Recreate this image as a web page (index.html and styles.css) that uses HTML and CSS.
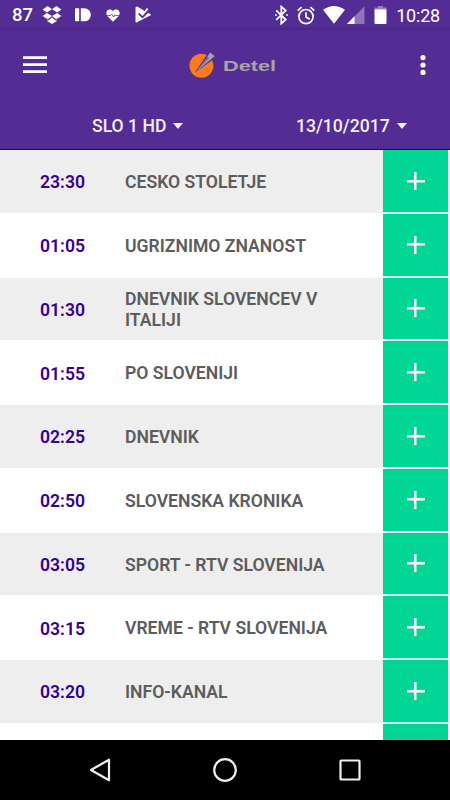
FILE: index.html
```
<!DOCTYPE html>
<html lang="sl">
  <head>
    <meta charset="UTF-8" />
    <meta name="viewport" content="width=device-width, initial-scale=1" />
    <title>Detel - spored</title>
    <link rel="stylesheet" href="styles.css">
  </head>
  <body>
    <div class="screen">
      <div class="statusbar">
        <div class="status-left">
          <span class="status-text">87</span>
          <svg class="dropbox" width="20" height="20" viewBox="0 0 20 20" fill="#fff">
            <path d="M5.7 1L10 4.3 4.8 7.5 .6 4.4zM14.3 1L10 4.3l5.2 3.2 4.2-3.1zM4.8 7.9L.6 11l5.1 3.2L10 11zM15.2 7.9l4.2 3.1-5.1 3.2L10 11zM5.4 15.1l.8.4L10 12.4l3.8 3.1.8-.4v1.2L10 19l-4.6-2.7z" />
          </svg>
          <svg class="push" width="16" height="14" viewBox="0 0 16 14" fill="#fff">
            <rect x="0" y=".3" width="4.2" height="13" rx=".8" />
            <path d="M5.8.3H9.5a6.4 6.5 0 0 1 0 13H5.8z" />
          </svg>
          <svg class="heart" width="14" height="13" viewBox="0 0 14 13">
            <path d="M7 12.8L1.4 7.2C-1 4 .8.4 3.7.4 5.3.4 6.4 1.1 7 2c.6-.9 1.7-1.6 3.3-1.6 2.9 0 4.7 3.6 2.3 6.8z" fill="#fff" />
            <path d="M1 6.6h3.6l1.1-1.2 1.9 2.6 1.3-2.2.8.8H13" fill="none" stroke="#532c94" stroke-width=".8" />
          </svg>
          <svg class="play" width="17" height="18" viewBox="0 0 17 18">
            <path d="M1 1.2v15L15.6 8.8 13 7.2 7.6 12.4 3.6 8.4l2-2 2 2 2.4-2.6L2.6 1.2z" fill="#fff" stroke="#fff" stroke-width="1" stroke-linejoin="round" />
            <path d="M4 7.4l3.5 3.5 6.6-7" fill="none" stroke="#532c94" stroke-width="2.4" />
            <path d="M5 6.2l2.5 2.5 5.2-6" fill="none" stroke="#fff" stroke-width="1.8" />
          </svg>
        </div>
        <div class="status-right">
          <svg class="bluetooth" width="13" height="20" viewBox="0 0 13 20" fill="none" stroke="#fff" stroke-width="1.8">
            <path d="M1.2 5.4l9.5 9.2-4.4 4V1.7l4.4 3.9-9.5 9.3" />
            <path d="M.9 9.3v1.5M12 9.3v1.5" />
          </svg>
          <svg class="alarm" width="18" height="19" viewBox="0 0 18 19" fill="none" stroke="#fff" stroke-width="1.7">
            <circle cx="9" cy="10.6" r="7.1" />
            <path d="M.7 4.6L4.6 1.2M17.3 4.6l-3.9-3.4M9 6.2v4.8l3.7 2.3" />
          </svg>
          <svg class="wifi" width="22" height="18" viewBox="0 0 22 18" fill="#fff">
            <path d="M0 3.8Q11-3.8 22 3.8L11 17.8z" />
          </svg>
          <svg class="signal" width="18" height="18" viewBox="0 0 18 18" fill="#fff">
            <path d="M17.5.3V18H0z" opacity=".35" />
            <path d="M7.5 10.3V18H0z" />
          </svg>
          <svg class="battery" width="13" height="18" viewBox="0 0 13 18" fill="#fff">
            <path d="M4 0h5v1.5h3.5V3.3H.5V1.5H4z" opacity=".4" />
            <path d="M.5 3.3h12V17q0 1-1 1h-10q-1 0-1-1z" />
          </svg>
          <span class="status-text clock">10:28</span>
        </div>
      </div>

      <div class="toolbar">
        <svg width="24" height="18" viewBox="0 0 24 18" fill="#fff">
          <path d="M0 .3h24v2.6H0zM0 7.3h24v2.6H0zM0 14.3h24v2.6H0z" />
        </svg>
        <svg class="logo" width="90" height="28" viewBox="0 0 90 28">
          <circle cx="12.4" cy="14.8" r="12" fill="#f97a1f" />
          <path d="M6 21.4L18.4 3l6.4 5z" fill="#532c94" />
          <path d="M7.4 20.2L21.2 1.6l4.4 3.6z" fill="#a9a5a4" />
          <path d="M6.4 20.8L18 5.2l2.2 1.8z" fill="#532c94" opacity=".55" />
          <text class="logo-text" x="34" y="20.2" textLength="53" lengthAdjust="spacingAndGlyphs">Detel</text>
        </svg>
        <svg width="6" height="22" viewBox="0 0 6 22" fill="#fff">
          <circle cx="3" cy="3.6" r="2.6" />
          <circle cx="3" cy="11" r="2.6" />
          <circle cx="3" cy="18.4" r="2.6" />
        </svg>
      </div>

      <div class="filters">
        <div class="select channel">SLO 1 HD <span class="caret"></span></div>
        <div class="select date">13/10/2017 <span class="caret"></span></div>
      </div>

      <ul class="programme">
        <li class="row">
          <span class="time">23:30</span>
          <span class="title">CESKO STOLETJE</span>
          <button class="add" aria-label="+"></button>
        </li>
        <li class="row">
          <span class="time">01:05</span>
          <span class="title">UGRIZNIMO ZNANOST</span>
          <button class="add" aria-label="+"></button>
        </li>
        <li class="row">
          <span class="time">01:30</span>
          <span class="title">DNEVNIK SLOVENCEV V ITALIJI</span>
          <button class="add" aria-label="+"></button>
        </li>
        <li class="row">
          <span class="time">01:55</span>
          <span class="title">PO SLOVENIJI</span>
          <button class="add" aria-label="+"></button>
        </li>
        <li class="row">
          <span class="time">02:25</span>
          <span class="title">DNEVNIK</span>
          <button class="add" aria-label="+"></button>
        </li>
        <li class="row">
          <span class="time">02:50</span>
          <span class="title">SLOVENSKA KRONIKA</span>
          <button class="add" aria-label="+"></button>
        </li>
        <li class="row">
          <span class="time">03:05</span>
          <span class="title">SPORT - RTV SLOVENIJA</span>
          <button class="add" aria-label="+"></button>
        </li>
        <li class="row">
          <span class="time">03:15</span>
          <span class="title">VREME - RTV SLOVENIJA</span>
          <button class="add" aria-label="+"></button>
        </li>
        <li class="row">
          <span class="time">03:20</span>
          <span class="title">INFO-KANAL</span>
          <button class="add" aria-label="+"></button>
        </li>
        <li class="row">
          <span class="time"></span>
          <span class="title"></span>
          <button class="add" aria-label="+"></button>
        </li>
      </ul>

      <div class="navbar">
        <svg width="26" height="26" viewBox="0 0 26 26">
          <path d="M4 13L22 2.7v20.6z" />
        </svg>
        <svg width="26" height="26" viewBox="0 0 26 26">
          <circle cx="13" cy="13" r="10.8" />
        </svg>
        <svg width="26" height="26" viewBox="0 0 26 26">
          <rect x="3.5" y="3.5" width="19" height="19" rx=".8" />
        </svg>
      </div>
    </div>
  </body>
</html>
```
FILE: styles.css
```
* {
  box-sizing: border-box;
}
body {
  font-family: Roboto, "Noto Sans", sans-serif;
  margin: 0;
  padding: 0;
  background-color: #fff;
}
svg {
  display: block;
  flex: none;
}
.screen {
  display: flex;
  flex-direction: column;
  width: 450px;
  height: 800px;
  overflow: hidden;
}

/* status bar */
.statusbar {
  display: flex;
  justify-content: space-between;
  flex: none;
  height: 30px;
  padding: 0 10px 0 12px;
  background: linear-gradient(#532c94 27px, #482582 30px);
  color: #fff;
}
.status-left,
.status-right {
  display: flex;
  align-items: center;
}
.status-text {
  font-size: 18.5px;
  font-weight: 500;
  line-height: 30px;
}
.dropbox {
  margin-left: 9px;
}
.push {
  margin-left: 13px;
}
.heart {
  margin-left: 15px;
}
.play {
  margin-left: 15px;
}
.alarm {
  margin-left: 9px;
}
.wifi {
  margin-left: 8px;
}
.signal {
  margin-left: 2px;
}
.battery {
  margin-left: 9px;
}
.clock {
  padding-top: 1px;
  margin-left: 9px;
  font-size: 18px;
  font-weight: 450;
  letter-spacing: -0.2px;
}

/* header */
.toolbar {
  display: flex;
  justify-content: space-between;
  align-items: center;
  flex: none;
  height: 70px;
  padding: 0 24.5px 0 23px;
  background-color: #532c94;
}
.logo {
  margin-left: 2px;
}
.logo-text {
  font-family: "Liberation Sans", Arial, sans-serif;
  font-size: 14.5px;
  font-weight: bold;
  fill: #a9a5a4;
}
.filters {
  display: flex;
  flex: none;
  height: 50px;
  border-bottom: 1px solid #220080;
  background-color: #532c94;
}
.select {
  display: flex;
  align-items: center;
  width: 50%;
  padding-top: 2px;
  color: #f3eef8;
  font-size: 17.6px;
  font-weight: 500;
}
.channel {
  padding-left: 92px;
}
.date {
  padding-left: 71px;
}
.caret {
  margin-left: 7px;
  border-left: 5.5px solid transparent;
  border-right: 5.5px solid transparent;
  border-top: 6px solid #f3eef8;
}

/* programme list */
.programme {
  flex: 1;
  min-height: 0;
  margin: 0;
  padding: 0;
  overflow: hidden;
  list-style: none;
}
.row {
  display: flex;
  align-items: center;
  height: 63.75px;
  padding: 0 2px 0 40px;
  border-bottom: 1.25px solid #fff;
}
.row:nth-child(odd) {
  background-color: #eee;
}
.time {
  width: 85px;
  padding-top: 2px;
  color: #38008f;
  font-size: 17.6px;
  font-weight: 600;
}
.title {
  flex: 1;
  padding-top: 2px;
  padding-right: 50px;
  color: #5c5c5c;
  font-size: 17.6px;
  font-weight: 600;
  line-height: 20.5px;
}
.add {
  display: flex;
  align-items: center;
  justify-content: center;
  align-self: stretch;
  width: 65px;
  padding: 0;
  border: none;
  border-bottom: 0.5px solid #c9f3e5;
  background-color: #02d695;
}
.add::before {
  content: "";
  width: 18px;
  height: 18px;
  background: linear-gradient(#fff, #fff) center / 18px 2.5px no-repeat,
    linear-gradient(#fff, #fff) center / 2.5px 18px no-repeat;
}

/* android navigation */
.navbar {
  display: flex;
  justify-content: center;
  align-items: center;
  gap: 99px;
  flex: none;
  height: 60px;
  background-color: #000;
}
.navbar svg {
  fill: none;
  stroke: #eee;
  stroke-width: 2.2;
  stroke-linejoin: round;
}
```
